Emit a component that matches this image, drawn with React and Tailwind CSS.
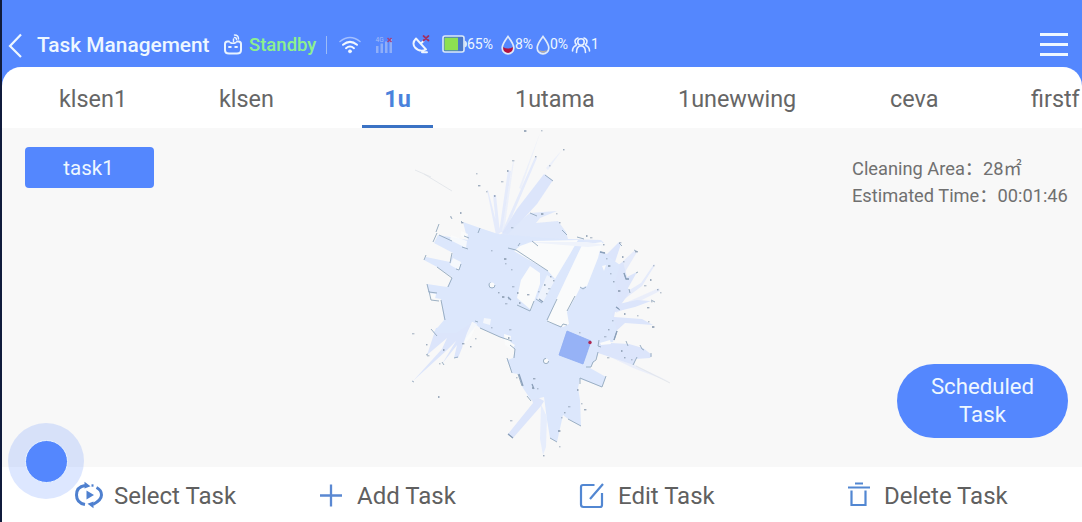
const ROBOTO = "font-['Roboto','Noto_Sans_CJK_SC',sans-serif]";

const WALLS = [
  'M433 242l4-9M436 232l3-8M439 235l13 6M462 247l6 2M452 253l-2 10M424 260l2-5M461 264l-2 6-3-1M437 267l15 11-4 9M427 284l2 8 8 1M441 300l4 20M429 291l2 9 8 1M431 329l6 7',
  'M480 228l-2 5M451 217l1 2M461 221l2 2M464 236l5 2M508 248l8 2 32 21M532 241l6 5M518 246l2-3M577 237l7 2M545 175l8 6M562 230l5 5M530 213l7 3',
  'M480 328l20 9 12 4M510 345l5 4-1 9M507 358l5 15M518 374l4 12M527 396l4 5M508 434l5 4M550 438l7 4M568 419l13 7M580 384v-6l22 9 4-11M586 367l5 0 2-5 3-2 2-8',
  'M600 252l5 1M619 243l3 3M634 250l4 2M624 273l2 6h3M638 272l-2 1M616 307l4 3M629 289l1 4M651 300l4 2M614 340l3-9M626 341l2 5M640 345l2 4 2 1M651 353v4M633 365l4-8M599 340l-1 6 3 1M575 296l-8 15M547 321l14 6 2-3 4 1',
  'M517 305l13 6 4-10M547 320l10-21M475 321l3 1M454 358l4-1M442 362l2 3M426 355l2-1M414 382l-2-1M580 287l3 2 3-2M536 299l6 4',
];

const SPECKS = [
  [524, 130], [541, 130], [535, 156], [512, 160], [507, 170], [476, 173], [478, 185], [486, 191], [494, 195], [501, 181],
  [563, 149], [549, 165], [541, 213], [556, 213], [559, 222], [511, 227], [460, 212], [450, 216], [461, 222], [491, 250],
  [586, 235], [590, 237], [603, 244], [606, 258], [608, 265], [610, 273], [613, 281], [619, 242], [622, 256], [623, 261],
  [635, 251], [653, 265], [650, 279], [644, 285], [657, 289], [660, 292], [618, 290], [612, 320], [608, 329], [604, 336],
  [624, 313], [637, 315], [647, 307], [651, 301], [621, 350], [607, 357], [624, 357], [631, 359], [652, 326], [648, 321],
  [426, 344], [427, 355], [443, 349], [439, 363], [462, 343], [475, 338], [438, 396], [412, 333], [470, 346], [491, 327],
  [502, 296], [508, 298], [498, 292], [509, 329], [508, 337], [516, 377], [533, 378], [537, 388], [532, 387], [510, 420],
  [543, 455], [559, 446], [558, 430], [561, 417], [564, 412], [568, 406], [577, 389], [581, 403],
  [584, 409], [579, 332], [517, 292], [512, 286], [550, 276], [505, 263], [504, 258], [511, 269], [553, 280], [548, 288],
  [544, 284], [546, 293], [527, 294], [538, 291], [519, 302], [505, 303],
];

function FloorMap() {
  return (
    <svg className="h-[339px] w-[290px] shrink-0" viewBox="400 128 290 339" aria-hidden="true">
      <g fill="#e5ebfb">
        <path d="M496 235L487 190l1 0 11 43zM497 235L493 195l3 0 4 38zM499 233l9-63 3 1-9 61zM502 232l33-75 2 1-32 75z" />
        <path d="M501 232l12-71 1 0-10 71zM519 188l21-55-19 56zM546 168l16-18-14 20z" opacity=".6" />
        <path d="M613 300l28-17 13-19 1 1-13 21-27 20zM612 282l8-18 14-13 3 1-12 20-8 18z" />
        <path d="M616 307l43-19 1 3-44 22zM600 352l33 12 37 18-37-14z" opacity=".75" />
      </g>
      <g fill="#dce5fb">
        <path d="M502 233l15-24 27-35 9 6-16 24-12 13-17 17z" />
        <path d="M500 235l20-14 10-8 27-2-17 7-4 5 22-2 8 11 2 7 33 1 3 3-64 1-17 3z" opacity=".9" />
        <path d="M602 252l5 2 12-12 2 2-8 24 10-6 4 15 10-5-9 16 2 4-13 18-4 3-4-30z" />
        <path d="M614 305l23-5 14 1-16 6-20 5-1 5 28 2 11 6-28-2-11 10-8 2z" />
        <path d="M597 343l14 0 18 1 14 4 9 7-2 3-14 1-2 6-36-12z" />
        <path d="M436 328l-9 27 20-17-5 11-29 32 34-31 9-9-14 23 15-19-3 13 4 0 8-20 13-16z" />
        <path d="M530 393l14 8-3 5-28 32-5-4 25-31z" />
      </g>
      <path
        fill="#dce7fc"
        d="M498 234L480 228 463 222 466 234 468 240 438 235 434 243 453 253 450 262 426 257 424 260 437 267 452 277 447 287 427 284 429 297 441 299 444 320 433 333 456 333 473 322 480 328 500 337 512 343 515 350 513 358 507 360 512 373 518 374 523 388 531 400 544 397 547 420 550 438 557 442 563 415 568 419 581 426 580 400 578 388 580 379 602 387 606 377 590 368 598 355 599 343 613 342 617 330 612 314 618 303 615 282 620 265 602 252 582 240 545 238z"
      />
      <path d="M541 404l-1 35 3 16 3-8 1-30z" fill="#e6edfc" />
      <g fill="#fafbfb">
        <path d="M514 251L520 246 534 241 578 240 570 254 555 279 548 271z" />
        <path d="M517 298L521 280 530 266 540 273 540 284 531 310z" />
        <path d="M547 275l8 5-12 22-6-3z" opacity=".6" />
        <path d="M582 245L602 242 598 258 587 286 580 288 576 296 567 312 569 324 563 327 547 322 556 300z" />
        <path d="M451 235l16 6-1 7-16-8zM461 231l7 3-1 5-6-3zM453 258l8 4-2 8-9-5z" opacity=".85" />
        <path d="M472 322l5 2-6 13-9 10 5-14zM484 318l7 1-1 6-7-2z" opacity=".8" />
        <path d="M504 334l7 2-1 6 5 3-3 4-7-4zM600 343l10-3 1 4-10 1z" />
        <circle cx="492" cy="285" r="2.500" /><circle cx="546" cy="361" r="2.500" />
        <path d="M602 266l4-1-2 6zM428 293l8 1-1 5-6-2z" />
      </g>
      <path d="M526 242h61l18 3-17 2z" fill="#eff3fb" />
      <path d="M567 331l24 10-8 23-24-9z" fill="#96b2f6" stroke="#8eacf2" strokeWidth=".8" />
      <g fill="none" stroke="#93a9be" strokeWidth="1" opacity=".9">
        {WALLS.map((d) => <path key={d} d={d} />)}
        <circle cx="492" cy="285" r="3" strokeDasharray="12 7" /><circle cx="546" cy="361" r="2.600" strokeDasharray="12 5" />
      </g>
      <path d="M519 374l4 12M532 384l2 5M600 252l5 1M616 307l3 2M624 273l2 6 3 0M508 434l5 4M617 331l-3 9M539 299l4 3M508 297l3 3" stroke="#8ba0ba" strokeWidth="1.300" fill="none" />
      <g fill="#8fa0b4">
        {SPECKS.map(([x, y], i) => <rect key={i} x={x} y={y} width={i % 3 ? 1.5 : 2.4} height={i % 4 ? 1.4 : 2} opacity={i % 2 ? 0.6 : 0.85} />)}
      </g>
      <path d="M415 170l16 7M424 174l28 17M636 366l34 17" stroke="#e2e5ea" strokeWidth=".9" fill="none" />
      <circle cx="590" cy="342.500" r="1.700" fill="#b0274f" />
    </svg>
  );
}

function RobotIcon() {
  return (
    <svg className="h-[22px] w-[20px]" viewBox="0 0 20 22" fill="none" stroke="#e8f3ff" strokeWidth="2" strokeLinecap="round">
      <path d="M6 7.500H4.500Q2 7.500 2 10v6Q2 19.500 6 19.500h8q4 0 4-3.500v-6Q18 7.500 15.500 7.500H14" />
      <path d="M7 8.500q3 1.500 6 0M10.500 7.500V5M11.500 1q4 0 4 4M11.500 3.500q2 0 2 2" strokeWidth="1.500" />
      <path d="M6 13h1.800M12.200 13H14" strokeWidth="1.900" />
    </svg>
  );
}

function WifiIcon() {
  return (
    <svg className="h-[18px] w-[22px]" viewBox="0 0 22 18" fill="none" stroke="#f2f8ff" strokeLinecap="round">
      <path d="M1 5.500Q11-2.500 21 5.500" strokeWidth="1.500" opacity=".5" />
      <path d="M4 8.800Q11 3 18 8.800M7 12.200q4-3.500 8 0" strokeWidth="2" />
      <circle cx="11" cy="15.300" r="1.600" fill="#f2f8ff" strokeWidth=".6" />
    </svg>
  );
}

function SignalIcon() {
  return (
    <svg className="h-[18px] w-[18px]" viewBox="0 0 18 18">
      <g fill="#a5bdf7" opacity=".75">
        <rect x="1" y="10" width="2.500" height="7" /><rect x="5.500" y="7.500" width="2.500" height="9.500" />
        <rect x="10" y="5.500" width="2.500" height="11.500" /><rect x="14.500" y="3" width="2.500" height="14" />
      </g>
      <text x="0.500" y="6" fontSize="6.500" fill="#a5bdf7" fontFamily="Roboto">4G</text>
      <path d="M12.500 2l4 4m0-4l-4 4" stroke="#a4417f" strokeWidth="1.500" />
    </svg>
  );
}

function DishIcon() {
  return (
    <svg className="h-[20px] w-[20px]" viewBox="0 0 20 20" fill="none" stroke="#eef5ff" strokeWidth="1.900" strokeLinejoin="round" strokeLinecap="round">
      <path d="M5 3.500Q.5 8 4 12.500 8.500 17.500 15 14.500zM10 8.500l2.500-2.500M11 17.300h5" />
      <path d="M12.500 1l5 4.500m0-4.500l-5 4.500" stroke="#a02f65" strokeWidth="1.700" />
    </svg>
  );
}

function BatteryIcon() {
  return (
    <svg className="h-[18px] w-[25px]" viewBox="0 0 25 18">
      <rect x="1" y="1" width="21" height="16" rx="2" fill="#4a78c8" stroke="#dceaf8" strokeWidth="1.600" />
      <rect x="2.500" y="2.700" width="13.500" height="12.600" fill="#8de052" />
      <path d="M22.500 5.500q2.500.5 2.500 3.500t-2.500 3.500z" fill="#dceaf8" />
    </svg>
  );
}

function DropIcon({ color, level }) {
  return (
    <svg className="h-[20px] w-[14px]" viewBox="0 0 14 20">
      <path d={level} fill={color} />
      <path d="M7 1.500Q1.200 9 1.200 13a5.800 5.800 0 0 0 11.600 0Q12.800 9 7 1.500z" fill="none" stroke="#dfeafa" strokeWidth="1.700" />
    </svg>
  );
}

function PeopleIcon() {
  return (
    <svg className="h-[18px] w-[20px]" viewBox="0 0 20 18" fill="none" stroke="#e6f0ff" strokeWidth="1.600" strokeLinecap="round">
      <circle cx="10" cy="6" r="3.200" />
      <path d="M5.500 16.500q0-6.500 4.500-6.500t4.500 6.500M5.500 8.500Q4 7.500 4 5.300T7 2M14.500 8.500Q16 7.500 16 5.300T13 2M5 9.500Q1.500 11 1.500 15M15 9.500q3.500 1.500 3.500 5.500" />
    </svg>
  );
}

function SelectIcon() {
  return (
    <svg className="h-[28px] w-[30px]" viewBox="0 0 30 28" fill="none" stroke="#4f80cf" strokeWidth="3">
      <path d="M11 23.500Q2.500 22 2.500 14T11 4.600M22.500 6.500Q27.500 9 27.500 14T19 23.500" />
      <path d="M17.500 4.500h2" strokeWidth="2.400" />
      <path d="M10.500.8l6 4.500-6 2.200zM19.500 27.200l-6-4.500 6-2.200zM12.500 9.500l7.500 4.500-7.500 4.500z" fill="#4f80cf" stroke="none" />
    </svg>
  );
}

function PlusIcon() {
  return <svg className="h-[24px] w-[24px]" viewBox="0 0 24 24"><path d="M12 .5v22M1 11.500h22" stroke="#5a88d2" strokeWidth="2.300" /></svg>;
}

function EditIcon() {
  return (
    <svg className="h-[26px] w-[26px]" viewBox="0 0 26 26" fill="none" stroke="#5287d2" strokeWidth="2.200">
      <path d="M15.500 2H4Q2 2 2 4v17.500Q2 24 4.500 24H21q2 0 2-2V10M24 1L11 16" />
    </svg>
  );
}

function TrashIcon() {
  return (
    <svg className="h-[26px] w-[24px]" viewBox="0 0 24 26" fill="none" stroke="#5287d2" strokeWidth="2.200">
      <path d="M8 1.500h8M1 5.500h22M4.500 8.500V23h14V8.500" />
    </svg>
  );
}

export default function App() {
  return (
    <div className={`relative h-[522px] w-[1082px] overflow-hidden border-l-2 border-[#101b3c] bg-[#5487fe] ${ROBOTO}`}>
      <header className="flex h-[67px] items-center pt-[22px] whitespace-nowrap text-[#eef7ff]">
        <svg className="ml-[6px] h-[26px] w-[15px]" viewBox="0 0 15 26"><path d="M13 2.500L2 14 13 25" fill="none" stroke="#eef7ff" strokeWidth="2.200" /></svg>
        <h1 className="mt-[2px] ml-[14px] w-[186px] text-[20.850px] font-medium">Task Management</h1>
        <RobotIcon />
        <span className="mt-[2px] ml-[6px] w-[77px] text-[18.500px] font-medium text-[#8df08e]">Standby</span>
        <span className="h-[18px] w-px bg-[#9cbcf7]" />
        <div className="ml-[12px] flex items-center text-[14px]">
          <WifiIcon />
          <span className="ml-[14px]"><SignalIcon /></span>
          <span className="ml-[18px]"><DishIcon /></span>
          <span className="-mt-[2px] ml-[11px]"><BatteryIcon /></span>
          <span className="w-[33px]">65%</span>
          <span className="ml-px"><DropIcon color="#b3123f" level="M2 12q5 3 10 0v4q-5 5-10 0z" /></span>
          <span className="w-[21px]">8%</span>
          <DropIcon color="#b9ad9f" level="M3 15q4 2 8 0-1.500 3-4 3t-4-3z" />
          <span className="w-[21px]">0%</span>
          <PeopleIcon />
          <span>1</span>
        </div>
        <button className="mr-[14px] ml-auto flex flex-col gap-[7px]" aria-label="Menu">
          <span className="h-[3px] w-[28px] bg-[#eef7ff]" />
          <span className="h-[3px] w-[28px] bg-[#eef7ff]" />
          <span className="h-[3px] w-[28px] bg-[#eef7ff]" />
        </button>
      </header>

      <nav className="flex h-[61px] rounded-t-[19px] bg-white text-[23.400px] whitespace-nowrap text-[#666]">
        <span className="ml-[57px] w-[160px] pt-[15px]">klsen1</span>
        <span className="w-[143px] pt-[15px]">klsen</span>
        <span className="flex w-[71px] justify-center border-b-3 border-[#3a72c4] pt-[15px] font-bold text-[#4a82dc]">1u</span>
        <span className="ml-[82px] w-[163px] pt-[15px]">1utama</span>
        <span className="w-[212px] pt-[15px]">1unewwing</span>
        <span className="w-[141px] pt-[15px]">ceva</span>
        <span className="pt-[15px]">firstf</span>
      </nav>

      <main className="flex h-[339px] bg-[#f8f8f8]">
        <div className="w-[398px] shrink-0 pt-[19px] pl-[23px]">
          <button className="h-[41px] w-[129px] rounded-[4px] bg-[#5487fe] pt-[2px] pr-[2px] text-[20.500px] text-[#eef7ff]">task1</button>
        </div>
        <FloorMap />
        <div className="flex grow flex-col items-end">
          <div className="mt-[27px] w-[230px] text-[18.250px] leading-[27px] whitespace-nowrap text-[#707070]">
            <p>Cleaning Area：28㎡</p>
            <p>Estimated Time：00:01:46</p>
          </div>
          <button className="mt-auto mr-[14px] mb-[29px] h-[74px] w-[171px] rounded-full bg-[#5487fe] pb-[2px] text-[22.200px] leading-[28px] text-[#eef7ff]">
            Scheduled<br />Task
          </button>
        </div>
      </main>

      <footer className="flex h-[55px] items-center bg-white pt-[2px] text-[24px] whitespace-nowrap text-[#606060]">
        <div className="flex w-[317px] items-center pl-[72px]"><span className="-mt-[2px]"><SelectIcon /></span><span className="ml-[10px]">Select Task</span></div>
        <div className="flex w-[260px] items-center"><PlusIcon /><span className="ml-[14px]">Add Task</span></div>
        <div className="flex w-[268px] items-center"><EditIcon /><span className="ml-[13px]">Edit Task</span></div>
        <div className="flex items-center"><span className="-mt-[2px]"><TrashIcon /></span><span className="ml-[13px]">Delete Task</span></div>
      </footer>

      <div className="absolute top-[423px] left-[6px] flex size-[76px] items-center justify-center rounded-full bg-[#5487fe]/20">
        <div className="size-[43px] rounded-full border border-[#e9f3ff] bg-[#5487fe]" />
      </div>
    </div>
  );
}
